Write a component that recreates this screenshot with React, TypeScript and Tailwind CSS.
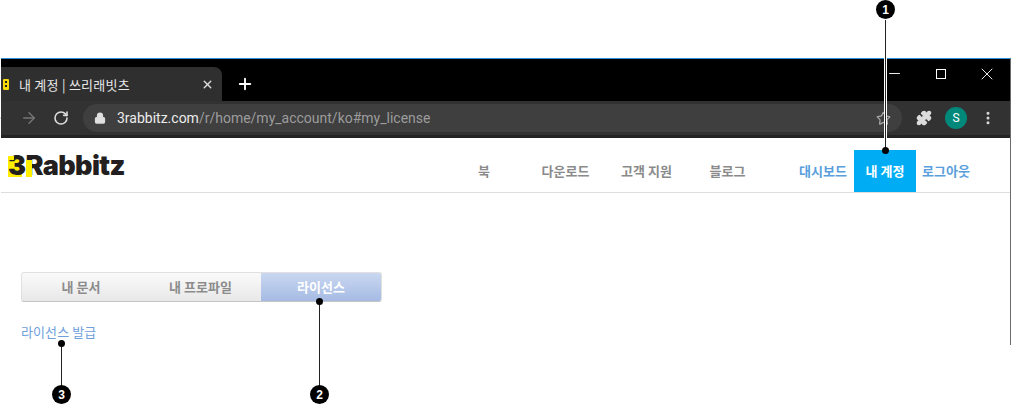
import { ArrowLeft, ArrowRight, Lock, Minus, MoreVertical, Plus, Puzzle, RotateCw, Star, X } from "lucide-react";

const font = "font-['Noto_Sans_CJK_KR','Noto_Sans',sans-serif]";

function Callout({ n, left, top, lineTop, lineHeight, dotTop }: { n: number; left: string; top: string; lineTop: string; lineHeight: string; dotTop: string }) {
  return (
    <>
      <div className={`absolute w-[1px] bg-[#222] ${left} ${lineTop} ${lineHeight}`} />
      <div className={`absolute w-[7px] h-[7px] -ml-[3px] rounded-full bg-black ${left} ${dotTop}`} />
      <div className={`absolute w-[19px] h-[19px] -ml-[9px] rounded-full bg-black text-white flex items-center justify-center text-[12px] font-bold font-['Liberation_Sans',sans-serif] ${left} ${top}`}>
        {n}
      </div>
    </>
  );
}

export default function App() {
  return (
    <div className={`relative w-[1012px] h-[405px] bg-white overflow-hidden ${font}`}>
      <div className="pt-[58px] pl-[1px]">
        <div className="w-[1010px] h-[287px] border-t border-t-[#2b8fd6] border-r border-r-[#6b6b6b]">
          {/* tab strip */}
          <div className="h-[42px] bg-black flex items-end">
            <div className="w-[221px] h-[34px] bg-[#2f2f2f] rounded-tr-lg flex items-center text-white">
              <div className="w-[6px] h-[11px] ml-[2px] bg-[#f5d90a] rounded-[1px] flex flex-col justify-center gap-[2px] pl-[2px]">
                <div className="w-[2px] h-[2px] bg-[#222]" />
                <div className="w-[2px] h-[2px] bg-[#222]" />
              </div>
              <span className="ml-[10px] flex-1 text-[13px] leading-none tracking-[0.25px] text-[#e8e8e8]">내 계정 | 쓰리래빗츠</span>
              <X size={13} strokeWidth={2.5} className="mr-[8px] text-[#dcdcdc]" />
            </div>
            <div className="ml-[14px] h-[34px] flex items-center">
              <Plus size={18} strokeWidth={2.5} className="text-white" />
            </div>
            <div className="flex-1 h-[42px] pb-[13px] flex items-center justify-end text-white">
              <Minus size={17} strokeWidth={1.3} className="mr-[33px]" />
              <div className="w-[10px] h-[10px] border border-white mr-[31px]" />
              <X size={20} strokeWidth={1.1} className="mr-[13px]" />
            </div>
          </div>
          {/* toolbar */}
          <div className="h-[37px] bg-[#323232] border-b-[3px] border-b-[#232323] flex items-center text-[#dcdcdc]">
            <ArrowLeft size={18} className="-ml-[15px] text-[#c8c8c8]" />
            <ArrowRight size={18} className="ml-[16px] text-[#757575]" />
            <RotateCw size={16} strokeWidth={2.4} className="ml-[15px]" />
            <div className="ml-[14px] w-[819px] h-[28px] rounded-full bg-[#3f3f3f] flex items-center">
              <Lock size={12} strokeWidth={2.5} fill="#e0e0e0" className="ml-[11px]" />
              <span className="ml-[11px] flex-1 text-[14px] leading-none font-['Roboto',sans-serif] text-[#9c9c9c]">
                <span className="text-[#ececec]">3rabbitz.com</span>/r/home/my_account/ko#my_license
              </span>
              <Star size={15} className="mr-[11px] text-[#a8a8a8]" />
            </div>
            <Puzzle size={16} fill="#dcdcdc" className="ml-[14px]" />
            <div className="ml-[13px] w-[22px] h-[22px] rounded-full bg-[#00897b] flex items-center justify-center text-[12px] text-white font-['Roboto',sans-serif]">
              S
            </div>
            <MoreVertical size={16} strokeWidth={2.5} className="ml-[13px]" />
          </div>
          {/* site header */}
          <div className="h-[55px] border-b border-b-[#dedede] flex">
            <div className="w-[450px] flex items-center pl-[7px] pt-[1px]">
              <div className="relative h-[24px] font-['Inter',sans-serif] font-black text-[27px] leading-[24px] tracking-[-0.6px] text-[#231f20]">
                {/* yellow parts of the logo */}
                <div className="absolute left-0 top-[2px] w-[14px] h-[21px] bg-[#ffee00]" />
                <span className="relative">3Rabbitz</span>
                <div className="absolute left-0 top-[2px] w-[6px] h-[4px] bg-[#ffee00]" />
                <div className="absolute left-[18px] top-[6px] w-[6px] h-[17px] bg-[#ffee00]" />
              </div>
            </div>
            <nav className="flex text-[13px] font-bold text-[#8a8a8a] pt-[12px] h-[54px]">
              <a className="w-[74px] pr-[8px] h-[42px] flex items-center justify-center">북</a>
              <a className="w-[81px] h-[42px] flex items-center justify-center">다운로드</a>
              <a className="w-[81px] h-[42px] flex items-center justify-center">고객 지원</a>
              <a className="w-[81px] h-[42px] flex items-center justify-center">블로그</a>
              <a className="w-[86px] pl-[24px] h-[42px] flex items-center justify-center text-[#5a9fdc]">대시보드</a>
              <a className="w-[62px] h-[42px] flex items-center justify-center bg-[#00adf5] text-white">내 계정</a>
              <a className="w-[60px] h-[42px] flex items-center justify-center text-[#5a9fdc]">로그아웃</a>
            </nav>
          </div>
          {/* page body */}
          <div className="pl-[20px] pt-[79px]">
            <div className="w-[361px] h-[30px] flex rounded-[3px] border border-[#e0e0e0] border-b-[#c4c4c4] overflow-hidden bg-gradient-to-b from-[#fafafa] to-[#e8e8e8] text-[13px] font-bold text-[#8c8c8c]">
              <a className="w-[118px] flex items-center justify-center">내 문서</a>
              <a className="w-[121px] flex items-center justify-center">내 프로파일</a>
              <a className="w-[120px] flex items-center justify-center bg-gradient-to-b from-[#c9d7f0] to-[#a6bbe4] text-white">라이선스</a>
            </div>
            <a className="block mt-[21px] text-[13px] leading-[18px] tracking-[0.1px] text-[#6f9fdc]">라이선스 발급</a>
          </div>
        </div>
      </div>

      <div className="absolute left-[884px] top-[20px] w-[3px] h-[130px] bg-white" />
      <Callout n={1} left="left-[885px]" top="top-0" lineTop="top-[20px]" lineHeight="h-[130px]" dotTop="top-[147px]" />
      <Callout n={2} left="left-[319px]" top="top-[385px]" lineTop="top-[302px]" lineHeight="h-[84px]" dotTop="top-[298px]" />
      <Callout n={3} left="left-[61px]" top="top-[385px]" lineTop="top-[343px]" lineHeight="h-[43px]" dotTop="top-[340px]" />
    </div>
  );
}
